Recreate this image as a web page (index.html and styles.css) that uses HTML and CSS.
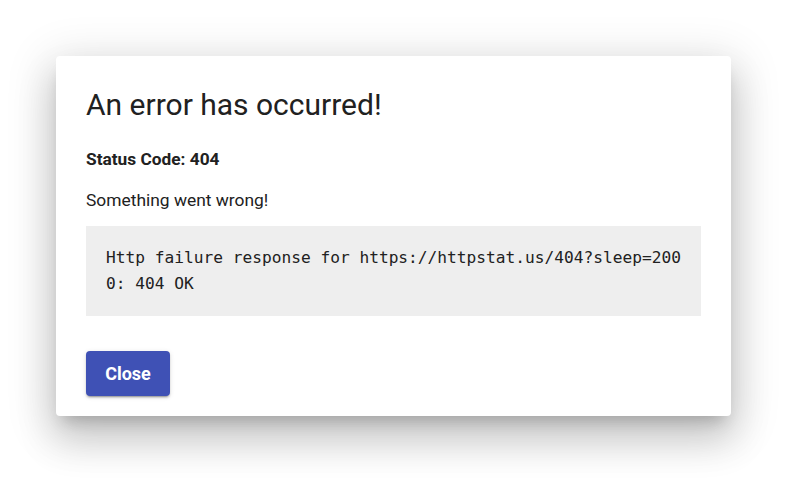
FILE: index.html
```html
<!DOCTYPE html>
<html>
<head>
<meta charset="utf-8">
<link rel="stylesheet" href="styles.css">
</head>
<body>
<div class="stage">
  <div class="dialog">
    <h2 class="title">An error has occurred!</h2>
    <p class="status">Status Code: 404</p>
    <p class="message">Something went wrong!</p>
    <pre class="detail">Http failure response for https://httpstat.us/404?sleep=2000: 404 OK</pre>
    <div class="actions">
      <button class="close">Close</button>
    </div>
  </div>
</div>
</body>
</html>
```
FILE: styles.css
```css
html, body {
  margin: 0;
  padding: 0;
  background: #fff;
}
body {
  font-family: Roboto, "Liberation Sans", sans-serif;
  color: #212121;
}
.stage {
  padding: 56px 63px 72px 56px;
}
.dialog {
  width: 675px;
  height: 360px;
  box-sizing: border-box;
  background: #fff;
  border-radius: 4px;
  padding: 30px 30px 20px;
  display: flex;
  flex-direction: column;
  box-shadow: 0 11px 15px -7px rgba(0,0,0,.2), 0 24px 38px 3px rgba(0,0,0,.14), 0 9px 46px 8px rgba(0,0,0,.12);
}
.title {
  margin: 0;
  font-size: 30px;
  font-weight: 400;
  line-height: 38px;
}
.status {
  margin: 23px 0 0;
  font-size: 17.3px;
  font-weight: 700;
  line-height: 24px;
}
.message {
  margin: 17px 0 0;
  font-size: 17.4px;
  line-height: 24px;
}
.detail {
  margin: 14px 0 0;
  background: #eee;
  padding: 19px 20px;
  font-family: "DejaVu Sans Mono", "Liberation Mono", monospace;
  font-size: 16.2px;
  line-height: 26px;
  white-space: pre-wrap;
  word-break: break-all;
  color: #212121;
}
.actions {
  margin-top: auto;
}
.close {
  width: 84px;
  height: 45px;
  border: none;
  border-radius: 4px;
  background: #3f51b5;
  color: #fff;
  font-family: Roboto, "Liberation Sans", sans-serif;
  font-weight: 700;
  font-size: 18px;
  box-shadow: 0 3px 1px -2px rgba(0,0,0,.2), 0 2px 2px 0 rgba(0,0,0,.14), 0 1px 5px 0 rgba(0,0,0,.12);
  cursor: pointer;
}
```
